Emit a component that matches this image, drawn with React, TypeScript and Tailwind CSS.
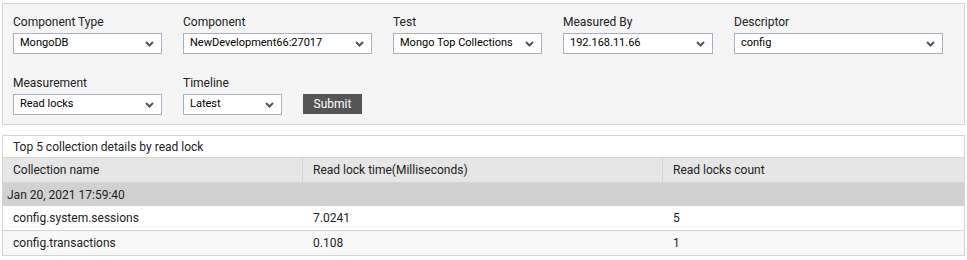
import React from "react";

type Field = {
  label: string;
  value: string;
  width: string;
};

const TOP_FIELDS: Field[] = [
  { label: "Component Type", value: "MongoDB", width: "w-[149px]" },
  { label: "Component", value: "NewDevelopment66:27017", width: "w-[189px]" },
  { label: "Test", value: "Mongo Top Collections", width: "w-[149px]" },
  { label: "Measured By", value: "192.168.11.66", width: "w-[150px]" },
  { label: "Descriptor", value: "config", width: "w-[209px]" },
];

const ROWS = [
  { name: "config.system.sessions", time: "7.0241", count: "5" },
  { name: "config.transactions", time: "0.108", count: "1" },
];

function Chevron() {
  return (
    <svg width="9" height="6" viewBox="0 0 9 6" aria-hidden>
      <path d="M1 1l3.5 3.5L8 1" fill="none" stroke="#555" strokeWidth="2" />
    </svg>
  );
}

function SelectBox({ label, value, width }: Field) {
  return (
    <div className="flex flex-col">
      <label className="mb-[3px] h-[17px] text-[12px] leading-[18px] text-[#222]">{label}</label>
      <div
        className={`${width} flex h-[21px] items-center justify-between border border-[#a9b0c2] bg-white pl-[6px] pr-[7px] text-[11px] text-black`}
      >
        <span>{value}</span>
        <Chevron />
      </div>
    </div>
  );
}

export default function App() {
  return (
    <div
      className="min-h-[260px] bg-white px-[2px] pt-[3px]"
      style={{ fontFamily: "Roboto, 'Liberation Sans', sans-serif" }}
    >
      <div className="border border-[#d4d4d4] bg-[#f5f5f5] pl-[10px] pt-[9px] pb-[9px]">
        <div className="flex gap-[21px]">
          {TOP_FIELDS.map((f) => (
            <SelectBox key={f.label} {...f} />
          ))}
        </div>
        <div className="mt-[20px] flex items-end gap-[21px]">
          <SelectBox label="Measurement" value="Read locks" width="w-[149px]" />
          <SelectBox label="Timeline" value="Latest" width="w-[99px]" />
          <button
            type="button"
            className="mb-[1px] h-[20px] w-[59px] bg-[#555555] text-[12px] leading-[20px] text-white"
          >
            Submit
          </button>
        </div>
      </div>

      <div className="mt-[10px] border-x border-t border-[#d4d4d4] text-[12px] text-[#222]">
        <div className="flex h-[22px] items-center border-b border-[#d4d4d4] bg-white pl-[10px]">
          Top 5 collection details by read lock
        </div>
        <div className="grid h-[25px] grid-cols-[300px_360px_1fr] border-b border-[#d4d4d4] bg-[#e6e6e6]">
          <div className="flex items-center border-r border-[#d4d4d4] pl-[10px]">Collection name</div>
          <div className="flex items-center border-r border-[#d4d4d4] pl-[10px]">
            Read lock time(Milliseconds)
          </div>
          <div className="flex items-center pl-[10px]">Read locks count</div>
        </div>
        <div className="flex h-[23px] items-center bg-[#d1d1d1] pl-[4px]">Jan 20, 2021 17:59:40</div>
        {ROWS.map((r, i) => (
          <div
            key={r.name}
            className={`grid h-[25px] grid-cols-[300px_360px_1fr] border-b border-[#d4d4d4] ${
              i % 2 === 0 ? "bg-white" : "bg-[#f8f8f8]"
            }`}
          >
            <div className="flex items-center pl-[10px]">{r.name}</div>
            <div className="flex items-center pl-[10px]">{r.time}</div>
            <div className="flex items-center pl-[10px]">{r.count}</div>
          </div>
        ))}
      </div>
    </div>
  );
}
